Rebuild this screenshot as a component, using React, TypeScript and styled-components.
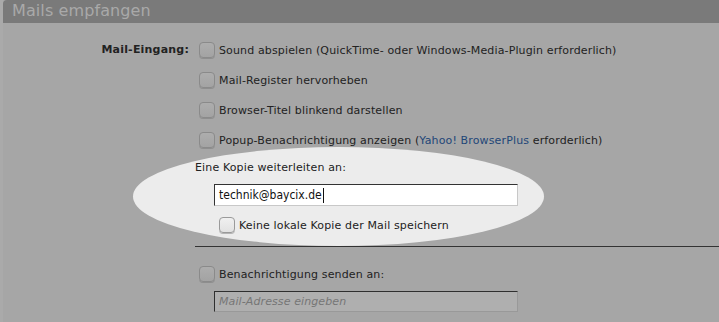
import React from "react";
import styled, { createGlobalStyle } from "styled-components";

const Global = createGlobalStyle`
  html, body { margin: 0; padding: 0; background: #aaaaaa; }
  body { font-family: "DejaVu Sans", Verdana, sans-serif; font-size: 11px; color: #222; }
  #root { width: 719px; height: 322px; overflow: hidden; }
`;

const Panel = styled.section`
  margin-left: 3px;
  height: 322px;
  background: #a6a6a6;
`;

const Header = styled.h2`
  margin: 0;
  height: 23px;
  line-height: 22px;
  padding-left: 9px;
  background: #7a7a7a;
  border-top-left-radius: 4px;
  color: #a9a9a9;
  font-size: 16px;
  font-weight: normal;
  letter-spacing: 0.1px;
`;

const Form = styled.div`
  display: grid;
  grid-template-columns: 186px 1fr;
  column-gap: 6px;
  padding-top: 12px;
`;

const Label = styled.div`
  text-align: right;
  font-weight: bold;
  line-height: 30px;
  letter-spacing: 0.2px;
`;

const Fields = styled.div`
  display: flex;
  flex-direction: column;
  letter-spacing: 0.14px;
`;

const Row = styled.label<{ $indent?: number; $height?: number }>`
  display: flex;
  align-items: center;
  gap: 4px;
  height: ${(p) => p.$height ?? 30}px;
  padding-left: ${(p) => p.$indent ?? 4}px;
  white-space: nowrap;
`;

const Box = styled.span<{ $light?: boolean }>`
  flex: none;
  width: 14px;
  height: 14px;
  border: 1px solid ${(p) => (p.$light ? "#9a9a9a" : "#8a8a8a")};
  border-radius: 4px;
  background: ${(p) =>
    p.$light
      ? "linear-gradient(#f0f0f0, #e2e2e2)"
      : "linear-gradient(#adadad, #a3a3a3)"};
  box-shadow: 0 1px 0 ${(p) => (p.$light ? "#b5b5b5" : "#8e8e8e")};
`;

const Link = styled.a`
  color: #1f4778;
  text-decoration: none;
`;

const Forward = styled.div`
  position: relative;
  isolation: isolate;
  display: flex;
  flex-direction: column;
`;

const Spotlight = styled.div`
  position: absolute;
  z-index: -1;
  left: -62px;
  top: -8px;
  width: 411px;
  height: 99px;
  border-radius: 50%;
  background: #ececec;
`;

const Caption = styled.div`
  height: 26px;
  line-height: 26px;
`;

const TextBox = styled.div<{ $empty?: boolean }>`
  margin-left: 19px;
  width: 298px;
  height: ${(p) => (p.$empty ? 19 : 20)}px;
  padding-left: 4px;
  border-style: solid;
  border-width: 1px;
  border-color: ${(p) =>
    p.$empty ? "#2f2f2f #999 #999 #2f2f2f" : "#333 #c8c8c8 #c8c8c8 #333"};
  background: ${(p) => (p.$empty ? "#afafaf" : "#fff")};
  color: ${(p) => (p.$empty ? "#767676" : "#111")};
  font-family: ${(p) =>
    p.$empty ? `"DejaVu Sans", sans-serif` : `"DejaVu Sans Condensed", "DejaVu Sans", sans-serif`};
  font-size: ${(p) => (p.$empty ? 11 : 12)}px;
  font-style: ${(p) => (p.$empty ? "italic" : "normal")};
  letter-spacing: ${(p) => (p.$empty ? "0.1px" : "0")};
  display: flex;
  align-items: center;
`;

const Caret = styled.span`
  display: inline-block;
  width: 1px;
  height: 15px;
  background: #111;
  margin-left: 1px;
`;

const Divider = styled.hr`
  margin: 13px 0 0 0;
  border: 0;
  border-top: 1px solid #333;
  height: 0;
`;

export default function App() {
  return (
    <>
      <Global />
      <Panel>
        <Header>Mails empfangen</Header>
        <Form>
          <Label>Mail-Eingang:</Label>
          <Fields>
            <Row>
              <Box />
              Sound abspielen (QuickTime- oder Windows-Media-Plugin erforderlich)
            </Row>
            <Row>
              <Box />
              Mail-Register hervorheben
            </Row>
            <Row>
              <Box />
              Browser-Titel blinkend darstellen
            </Row>
            <Row>
              <Box />
              <span>
                Popup-Benachrichtigung anzeigen (<Link>Yahoo! BrowserPlus</Link> erforderlich)
              </span>
            </Row>
            <Forward>
              <Spotlight />
              <Caption>Eine Kopie weiterleiten an:</Caption>
              <TextBox style={{ marginTop: 3 }}>
                technik@baycix.de
                <Caret />
              </TextBox>
              <Row $indent={24} $height={16} style={{ marginTop: 11 }}>
                <Box $light />
                Keine lokale Kopie der Mail speichern
              </Row>
            </Forward>
            <Divider />
            <Row $height={16} style={{ marginTop: 19 }}>
              <Box />
              Benachrichtigung senden an:
            </Row>
            <TextBox $empty style={{ marginTop: 9 }}>
              Mail-Adresse eingeben
            </TextBox>
          </Fields>
        </Form>
      </Panel>
    </>
  );
}
